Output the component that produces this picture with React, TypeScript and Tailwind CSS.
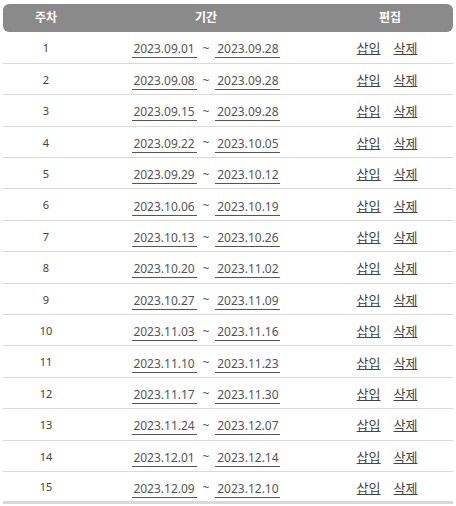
const weeks = [
  ['2023.09.01', '2023.09.28'],
  ['2023.09.08', '2023.09.28'],
  ['2023.09.15', '2023.09.28'],
  ['2023.09.22', '2023.10.05'],
  ['2023.09.29', '2023.10.12'],
  ['2023.10.06', '2023.10.19'],
  ['2023.10.13', '2023.10.26'],
  ['2023.10.20', '2023.11.02'],
  ['2023.10.27', '2023.11.09'],
  ['2023.11.03', '2023.11.16'],
  ['2023.11.10', '2023.11.23'],
  ['2023.11.17', '2023.11.30'],
  ['2023.11.24', '2023.12.07'],
  ['2023.12.01', '2023.12.14'],
  ['2023.12.09', '2023.12.10'],
]

function DateBox({ value }: { value: string }) {
  return (
    <span className="inline-block w-[65px] border-b border-[#555] pt-[2px] text-center text-[12px] leading-[16px] text-[#555]">
      {value}
    </span>
  )
}

export default function App() {
  return (
    <div
      className="bg-white px-[3px] pt-[4px]"
      style={{ fontFamily: '"Noto Sans", "Noto Sans CJK KR", sans-serif' }}
    >
      <table className="w-[450px] border-collapse">
        <thead>
          <tr className="h-[28px] bg-[#8a8a8a] text-[12px] font-bold text-white">
            <th className="w-[86px] rounded-tl-[6px] rounded-bl-[6px] font-bold">주차</th>
            <th className="w-[234px] font-bold">기간</th>
            <th className="rounded-tr-[6px] rounded-br-[6px] pl-[4px] font-bold">편집</th>
          </tr>
        </thead>
        <tbody>
          {weeks.map(([from, to], i) => (
            <tr
              key={i}
              className={`h-[31.4px] ${i === weeks.length - 1 ? 'border-b-[3px]' : 'border-b'} border-[#d9d9d9]`}
            >
              <td className="pt-[2px] text-center text-[11px] text-[#4a4038]">{i + 1}</td>
              <td className="text-center">
                <span className="inline-flex items-center gap-[6px]">
                  <DateBox value={from} />
                  <span className="text-[12px] text-[#555]">~</span>
                  <DateBox value={to} />
                </span>
              </td>
              <td className="text-center">
                <span className="inline-flex gap-[13px] pr-[2px] text-[13px] text-[#444]">
                  <a className="cursor-pointer underline">삽입</a>
                  <a className="cursor-pointer underline">삭제</a>
                </span>
              </td>
            </tr>
          ))}
        </tbody>
      </table>
    </div>
  )
}
